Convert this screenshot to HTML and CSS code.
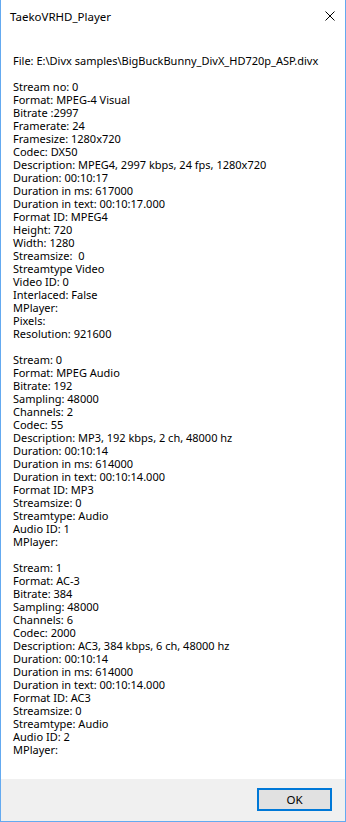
FILE: index.html
```html
<!DOCTYPE html>
<html>
<head>
<meta charset="utf-8">
<title>TaekoVRHD_Player</title>
<link rel="stylesheet" href="styles.css">
</head>
<body>
<div class="window">
  <div class="titlebar">
    <span class="title">TaekoVRHD_Player</span>
    <svg class="close" width="10" height="10" viewBox="0 0 10 10"><path d="M0.5 0.5 L9.5 9.5 M9.5 0.5 L0.5 9.5" stroke="#000" stroke-width="1" fill="none"/></svg>
  </div>
  <div class="content">
    <div class="info">
      <div class="line">File: E:\Divx samples\BigBuckBunny_DivX_HD720p_ASP.divx</div>
      <div class="line">&nbsp;</div>
      <div class="line">Stream no: 0</div>
      <div class="line">Format: MPEG-4 Visual</div>
      <div class="line">Bitrate :2997</div>
      <div class="line">Framerate: 24</div>
      <div class="line">Framesize: 1280x720</div>
      <div class="line">Codec: DX50</div>
      <div class="line">Description: MPEG4, 2997 kbps, 24 fps, 1280x720</div>
      <div class="line">Duration: 00:10:17</div>
      <div class="line">Duration in ms: 617000</div>
      <div class="line">Duration in text: 00:10:17.000</div>
      <div class="line">Format ID: MPEG4</div>
      <div class="line">Height: 720</div>
      <div class="line">Width: 1280</div>
      <div class="line">Streamsize:  0</div>
      <div class="line">Streamtype Video</div>
      <div class="line">Video ID: 0</div>
      <div class="line">Interlaced: False</div>
      <div class="line">MPlayer:</div>
      <div class="line">Pixels:</div>
      <div class="line">Resolution: 921600</div>
      <div class="line">&nbsp;</div>
      <div class="line">Stream: 0</div>
      <div class="line">Format: MPEG Audio</div>
      <div class="line">Bitrate: 192</div>
      <div class="line">Sampling: 48000</div>
      <div class="line">Channels: 2</div>
      <div class="line">Codec: 55</div>
      <div class="line">Description: MP3, 192 kbps, 2 ch, 48000 hz</div>
      <div class="line">Duration: 00:10:14</div>
      <div class="line">Duration in ms: 614000</div>
      <div class="line">Duration in text: 00:10:14.000</div>
      <div class="line">Format ID: MP3</div>
      <div class="line">Streamsize: 0</div>
      <div class="line">Streamtype: Audio</div>
      <div class="line">Audio ID: 1</div>
      <div class="line">MPlayer:</div>
      <div class="line">&nbsp;</div>
      <div class="line">Stream: 1</div>
      <div class="line">Format: AC-3</div>
      <div class="line">Bitrate: 384</div>
      <div class="line">Sampling: 48000</div>
      <div class="line">Channels: 6</div>
      <div class="line">Codec: 2000</div>
      <div class="line">Description: AC3, 384 kbps, 6 ch, 48000 hz</div>
      <div class="line">Duration: 00:10:14</div>
      <div class="line">Duration in ms: 614000</div>
      <div class="line">Duration in text: 00:10:14.000</div>
      <div class="line">Format ID: AC3</div>
      <div class="line">Streamsize: 0</div>
      <div class="line">Streamtype: Audio</div>
      <div class="line">Audio ID: 2</div>
      <div class="line">MPlayer:</div>
    </div>
  </div>
  <div class="footer">
    <button class="ok">OK</button>
  </div>
</div>
</body>
</html>
```

FILE: styles.css
```css
html, body {
  margin: 0;
  padding: 0;
  background: #ffffff;
}

.window {
  width: 346px;
  height: 822px;
  box-sizing: border-box;
  border-left: 1px solid #64aaf0;
  border-right: 1px solid #64aaf0;
  border-bottom: 1px solid #64aaf0;
  background: #ffffff;
  display: flex;
  flex-direction: column;
  font-family: "Noto Sans", "Open Sans", sans-serif;
  color: #000000;
}

.titlebar {
  height: 30px;
  flex: none;
  display: flex;
  align-items: center;
  justify-content: space-between;
  padding: 0 10px 0 9px;
}

.title {
  font-size: 11.5px;
  position: relative;
  top: 1px;
}

.close {
  display: block;
  margin-top: 1px;
}

.content {
  flex: 1;
  padding: 24px 0 0 12px;
}

.line {
  font-size: 11px;
  line-height: 13px;
  white-space: pre;
}

.footer {
  flex: none;
  height: 42px;
  background: #f0f0f0;
  display: flex;
  justify-content: flex-end;
  align-items: flex-start;
  padding: 9px 13px 0 0;
  box-sizing: border-box;
}

.ok {
  width: 75px;
  height: 23px;
  box-sizing: border-box;
  border: 2px solid #0078d7;
  background: #e1e1e1;
  font-family: "Noto Sans", "Open Sans", sans-serif;
  font-size: 11.5px;
  color: #000000;
  padding: 0;
  margin: 0;
}
```
